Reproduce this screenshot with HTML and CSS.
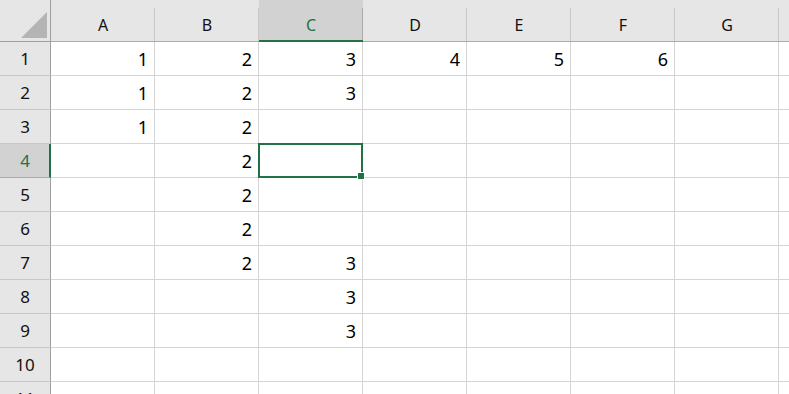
FILE: index.html
```html
<!DOCTYPE html>
<html lang="ko">
<head>
  <meta charset="UTF-8">
  <title>Sheet1</title>
  <link rel="stylesheet" href="styles.css">
</head>
<body>
  <div class="sheet">
    <div class="corner"><span class="tri"></span></div>
    <div class="colhead">A</div>
    <div class="colhead">B</div>
    <div class="colhead sel">C</div>
    <div class="colhead">D</div>
    <div class="colhead">E</div>
    <div class="colhead">F</div>
    <div class="colhead">G</div>
    <div class="colhead"></div>

    <div class="rowhead">1</div>
    <div class="cell">1</div><div class="cell">2</div><div class="cell">3</div><div class="cell">4</div><div class="cell">5</div><div class="cell">6</div><div class="cell"></div><div class="cell"></div>

    <div class="rowhead">2</div>
    <div class="cell">1</div><div class="cell">2</div><div class="cell">3</div><div class="cell"></div><div class="cell"></div><div class="cell"></div><div class="cell"></div><div class="cell"></div>

    <div class="rowhead">3</div>
    <div class="cell">1</div><div class="cell">2</div><div class="cell"></div><div class="cell"></div><div class="cell"></div><div class="cell"></div><div class="cell"></div><div class="cell"></div>

    <div class="rowhead sel">4</div>
    <div class="cell"></div><div class="cell">2</div><div class="cell active"><span class="handle"></span></div><div class="cell"></div><div class="cell"></div><div class="cell"></div><div class="cell"></div><div class="cell"></div>

    <div class="rowhead">5</div>
    <div class="cell"></div><div class="cell">2</div><div class="cell"></div><div class="cell"></div><div class="cell"></div><div class="cell"></div><div class="cell"></div><div class="cell"></div>

    <div class="rowhead">6</div>
    <div class="cell"></div><div class="cell">2</div><div class="cell"></div><div class="cell"></div><div class="cell"></div><div class="cell"></div><div class="cell"></div><div class="cell"></div>

    <div class="rowhead">7</div>
    <div class="cell"></div><div class="cell">2</div><div class="cell">3</div><div class="cell"></div><div class="cell"></div><div class="cell"></div><div class="cell"></div><div class="cell"></div>

    <div class="rowhead">8</div>
    <div class="cell"></div><div class="cell"></div><div class="cell">3</div><div class="cell"></div><div class="cell"></div><div class="cell"></div><div class="cell"></div><div class="cell"></div>

    <div class="rowhead">9</div>
    <div class="cell"></div><div class="cell"></div><div class="cell">3</div><div class="cell"></div><div class="cell"></div><div class="cell"></div><div class="cell"></div><div class="cell"></div>

    <div class="rowhead">10</div>
    <div class="cell"></div><div class="cell"></div><div class="cell"></div><div class="cell"></div><div class="cell"></div><div class="cell"></div><div class="cell"></div><div class="cell"></div>

    <div class="rowhead">11</div>
    <div class="cell"></div><div class="cell"></div><div class="cell"></div><div class="cell"></div><div class="cell"></div><div class="cell"></div><div class="cell"></div><div class="cell"></div>
  </div>
</body>
</html>
```

FILE: styles.css
```css
html, body {
  margin: 0;
  padding: 0;
  height: 100%;
  overflow: hidden;
  background: #fff;
  font-family: "Noto Sans", "Noto Sans CJK KR", sans-serif;
}
.sheet {
  display: grid;
  grid-template-columns: 51px repeat(8, 104px);
  grid-template-rows: 42px repeat(11, 34px);
}
.corner {
  background: #e6e6e6;
  border-right: 1px solid #9f9f9f;
  border-bottom: 1px solid #9f9f9f;
  box-sizing: border-box;
  position: relative;
}
.tri {
  position: absolute;
  left: 21px;
  top: 12px;
  width: 0;
  height: 0;
  border-left: 26px solid transparent;
  border-bottom: 26px solid #b4b4b4;
}
.colhead {
  background: #e6e6e6;
  border-bottom: 1px solid #ababab;
  box-sizing: border-box;
  display: flex;
  align-items: center;
  justify-content: center;
  font-size: 16px;
  color: #111;
  padding-top: 8px;
  position: relative;
}
.colhead::after {
  content: "";
  position: absolute;
  right: 0;
  top: 8px;
  bottom: 0;
  width: 1px;
  background: #c8c8c8;
}
.colhead.sel {
  background: #d2d2d2;
  color: #217346;
  border-bottom: 2px solid #217346;
  padding-top: 9px;
}
.colhead.sel::after {
  background: #ababab;
}
.rowhead {
  background: #e6e6e6;
  border-right: 1px solid #9f9f9f;
  border-bottom: 1px solid #c8c8c8;
  box-sizing: border-box;
  display: flex;
  align-items: center;
  justify-content: center;
  font-size: 17px;
  color: #111;
}
.rowhead.sel {
  background: #d2d2d2;
  color: #217346;
  border-right: 2px solid #217346;
  border-bottom-color: #ababab;
  padding-left: 1px;
}
.cell {
  border-right: 1px solid #d4d4d4;
  border-bottom: 1px solid #d4d4d4;
  box-sizing: border-box;
  display: flex;
  align-items: center;
  justify-content: flex-end;
  padding-right: 6px;
  font-size: 18px;
  color: #000;
  position: relative;
}
.cell.active::after {
  content: "";
  position: absolute;
  left: -1px;
  top: -1px;
  right: -1px;
  bottom: -1px;
  border: 2px solid #217346;
}
.handle {
  position: absolute;
  right: -3px;
  bottom: -3px;
  width: 6px;
  height: 6px;
  background: #217346;
  border: 1px solid #fff;
  z-index: 2;
}
```
